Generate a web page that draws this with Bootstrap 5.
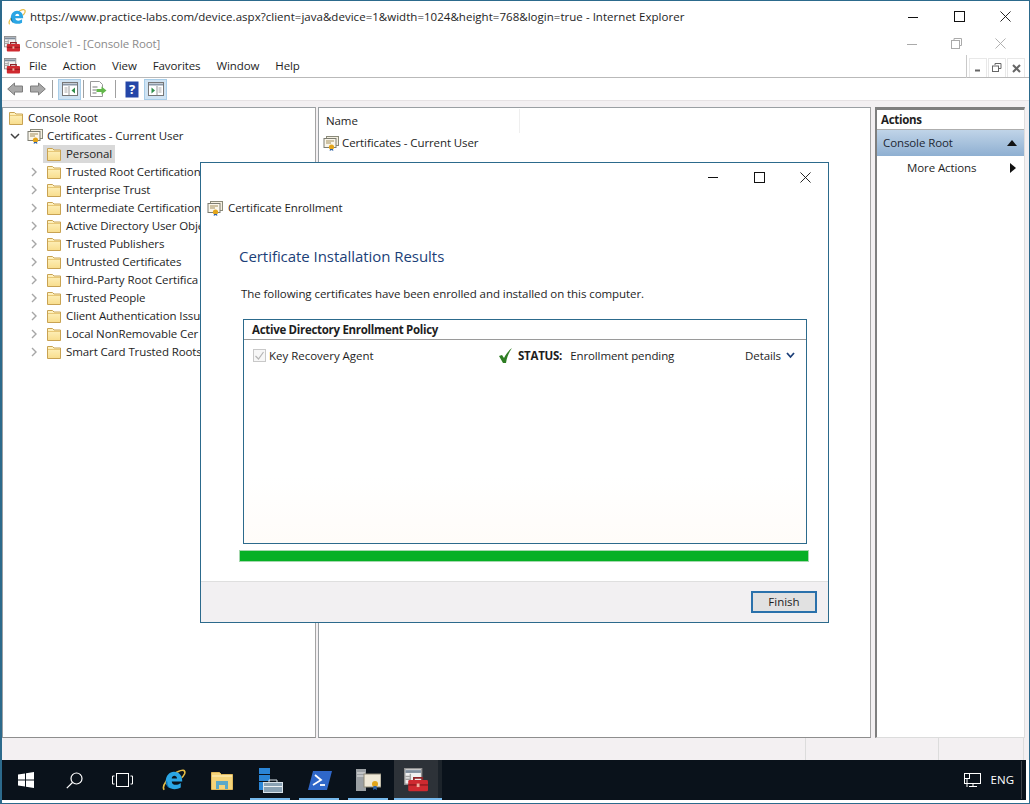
<!doctype html>
<html lang="en"><head><meta charset="utf-8"><title>Certificate Enrollment</title>
<link href="https://cdn.jsdelivr.net/npm/bootstrap@5.3.0/dist/css/bootstrap.min.css" rel="stylesheet">
<style>
html,body{height:100%;overflow:hidden;background:#fff}
body{font-family:"Open Sans","Noto Sans",sans-serif;font-size:11.5px;letter-spacing:-.1px;line-height:18px;color:#1e1e1e}
.shell{width:1030px;height:804px;border:solid #2c6a8c;border-width:1px 1px 1px 2px;display:flex;flex-direction:column;position:relative;background:#fff;overflow:hidden}
.ietitle{height:31px;padding-left:6px;gap:4px;flex:none}
.ietitle span{letter-spacing:.03px}
.winbtns{margin-left:auto;display:flex}
.ietitle .winbtns{margin-right:1px}
.winbtn{width:46px;height:30px;display:flex;align-items:center;justify-content:center}
.mmctitle{height:23px;flex:none;padding-left:2px;color:#8b8b8b;gap:5px}
.mmctitle .winbtns{margin-right:6px}
.mmctitle .winbtn{height:22px;width:44.5px}
.menubar{height:23px;flex:none;padding-left:2px;border-bottom:1px solid #b9b9b9;position:relative}
.menuitems{gap:16px;margin-left:9px}
.mdibtns{margin-left:auto;margin-right:4px;display:flex;gap:1px;align-self:flex-end;background:#fff}
.mdibtn{width:18px;height:19px;border:1px solid #e8e8e8;border-bottom:0;display:flex;align-items:center;justify-content:center}
.mdisep{position:absolute;right:62px;top:0;height:23px;width:1px;background:#c9c9c9}
.toolbar{height:23px;flex:none;border-bottom:1px solid #e6e2e4;padding-left:5px}
.tsep{width:1px;height:18px;background:#a0a0a0}
.tbtn{width:23px;height:21px;display:flex;align-items:center;justify-content:center}
.tbtn-on{background:#cfe3f3;border:1px solid #a8cde8}
.tg2{margin-left:2px}.tg5{margin-left:5px}.tg6{margin-left:6px}.tg7{margin-left:7px}.tg9{margin-left:9px}
.panes{flex:1;min-height:0;background:#f3f0f2;padding:6px 4px 0 0}
.pane{background:#fff;border:1px solid #9a9fa3;border-right-color:#a4a4a4;border-bottom-color:#8e8e8e;overflow:hidden}
.treepane{width:314px;flex:none;padding-top:1px}
.listpane{width:553px;flex:none;margin-left:2px}
.treerow{height:18px;display:flex;align-items:center;white-space:nowrap}
.tr0{padding-left:5px}.tr1{padding-left:5px}.tr2{padding-left:24px}
.ico{flex:none;display:block}
.chev{width:14px;flex:none;margin-right:5px;display:flex;justify-content:center}
.treelabel{margin-left:4px}
.sel{background:#d9d9d9;display:flex;align-items:center;height:18px;margin-left:-3px;padding:0 3px 0 3px}
.listhead{height:26px;padding-left:7px;display:flex;align-items:center}
.listhead span{width:194px;height:24px;display:flex;align-items:center;border-right:1px solid #efefef}
.listrow{padding-left:4px;height:18px;gap:3px}
.actpane{width:150px;flex:none;margin-left:4px;border:1px solid #dedede;border-top:3px solid #7f7f7f;border-left:2px solid #7f7f7f;border-bottom:1px solid #dcdcdc;background:#fff}
.acthead{height:20px;font-weight:700;padding-left:4px;border-bottom:1px solid #aeaeae;display:flex;align-items:center;letter-spacing:-.3px}
.actband{height:26px;background:linear-gradient(#c0d4e8,#8eafd1);padding:0 7px 0 6px;display:flex;align-items:center;justify-content:space-between;color:#1d2733}
.actrow{height:24px;padding:0 8px 0 30px;display:flex;align-items:center;justify-content:space-between}
.statusbar{height:22px;flex:none;background:#f3f0f2;display:flex;justify-content:flex-end;padding-right:5px}
.statusbar div{height:22px;border-left:1px solid #dcdcdc}
.sb1{width:133px}.sb2{width:85px}.sb3{width:1px}
.taskbar{height:40px;flex:none;background:#0a121b;display:flex;align-items:center;color:#fff;margin-right:3px;position:relative}
.tb-slot{width:48px;height:40px;display:flex;align-items:center;justify-content:center;position:relative;flex:none}
.tb-ie{margin-left:4px}
.tb-pin{width:49px}
.tb-pin::after{content:"";position:absolute;left:4px;right:5px;bottom:0;height:2px;background:#76b9ed}
.tb-cur{background:#2d3238;width:48px;border-right:4px solid #1c232a;margin-left:1px}
.tb-cur::after{left:0;right:-4px}
.tray{margin-left:auto;gap:10px;padding-right:7px;margin-right:4px;height:38px;border-right:1px solid #3c4248;letter-spacing:0}
.trayedge{height:3px;flex:none}
.dialog{position:absolute;left:198px;top:161px;width:629px;height:461px;background:#fff;border:1px solid #2c6a8c;display:flex;flex-direction:column}
.dlgtop{height:28px;flex:none;justify-content:flex-end}
.dlgtop .winbtn{width:46px;height:28px}
.dlgtitle{height:30px;padding-left:6px;gap:5px;flex:none;margin-top:2px}
.dlgbody{flex:1;min-height:0;padding:0 20px 0 38px}
.dlghead{font-size:15px;line-height:22px;color:#1c3f78;margin-top:22px;letter-spacing:-.05px}
.dlgintro{margin:18px 0 0 2px;height:18px;letter-spacing:-.07px}
.resultbox{margin:16px 0 0 4px;width:564px;height:225px;border:1px solid #2c6a8c;background:linear-gradient(#fff 70%,#fffcf9)}
.boxhead{height:20px;font-weight:700;padding-left:8px;border-bottom:1px solid #9a9a9a;display:flex;align-items:center;letter-spacing:-.3px}
.boxrow{height:31px;padding:0 11px 0 9px}
.chk{width:13px;height:13px;border:1px solid #c8c8c8;display:flex;align-items:center;justify-content:center;background:#f7f7f7;margin-right:3px}
.rowname{width:230px;letter-spacing:-.02px}
.statusword{font-weight:700;margin:0 8px 0 6px;letter-spacing:-.25px}
.details{margin-left:auto;gap:5px}
.prog{height:12px;width:570px;margin-top:6px;background:#06b025;border:1px solid #a5d8ae}
.dlgfoot{height:41px;flex:none;background:#f2f0f2;border-top:1px solid #dfdfdf;display:flex;align-items:center;justify-content:flex-end;padding-right:11px}
.finish{width:66px;height:22px;padding:0;font-size:11.5px;line-height:16px;color:#1e1e1e;background:#e1e1e1;border:2px solid #2a71ab;border-radius:0}
</style></head><body>
<svg width="0" height="0" class="position-absolute">
<defs>
<linearGradient id="fg" x1="0" y1="0" x2="0" y2="1"><stop offset="0" stop-color="#fff3c2"/><stop offset="1" stop-color="#f8dd8c"/></linearGradient>
<symbol id="folder" viewBox="0 0 16 16"><path d="M1.500 2.500h5l1.500 1.500h6.500v10.500h-13z" fill="url(#fg)" stroke="#c8a252"/><path d="M2 5.500h12" stroke="#e8c877"/></symbol>
<symbol id="cert" viewBox="0 0 16 16"><rect x="3.500" y="1.500" width="12" height="9" fill="#f4efe0" stroke="#8a8a7a"/><rect x="1" y="3.500" width="12" height="9" fill="#faf6ea" stroke="#7d7d72"/><path d="M3 6h8M3 8h5" stroke="#a38f5c"/><circle cx="8.500" cy="12" r="2.600" fill="#e3a51a"/><path d="M7 14l-.3 2 1.800-1 1.800 1-.3-2" fill="#2f62a8"/></symbol>
<symbol id="chevr" viewBox="0 0 10 10"><path d="M3 1l4 4-4 4" fill="none" stroke="#a6a6a6" stroke-width="1.400"/></symbol>
<symbol id="chevd" viewBox="0 0 10 10"><path d="M1 3l4 4 4-4" fill="none" stroke="#404040" stroke-width="1.500"/></symbol>
<symbol id="ie" viewBox="0 0 32 32"><path d="M3 29C-1 25 8 11 21 5c6-3 11-3 9 3-1 2-2 4-4 5" fill="none" stroke="#e6bd45" stroke-width="2.200"/><path d="M5 18C5 10 10 5 16 5c7 0 11 5 11 13H13c0 5 7 6 12 2v6c-9 5-20 1-20-8zm8-4h7c0-5-7-5-7 0z" fill="#2ba6e4"/><path d="M5 18c0 4 2 7 5 9-2-3-3-6-3-9z" fill="#0d6fb0"/></symbol>
<symbol id="mmc" viewBox="0 0 17 17"><rect x=".5" y=".5" width="12" height="11" fill="#f0f0f0" stroke="#8f8f8f"/><path d="M1 2.500h11" stroke="#7f8d9c" stroke-width="2"/><path d="M4.500 4v7M1 6h3.500M1 8h3.500" stroke="#a2a2a2"/><path d="M7 8.500V7h6v1.500" fill="none" stroke="#8f2226" stroke-width="1.200"/><rect x="3" y="8.500" width="14" height="8" rx="1" fill="#cf2a30"/><path d="M3 12h14" stroke="#8f1a1f"/><rect x="9" y="11" width="2" height="2.500" fill="#f0b0a0"/></symbol>
<symbol id="x" viewBox="0 0 12 12"><path d="M.5.5l11 11M11.500.5l-11 11" fill="none" stroke="currentColor"/></symbol>
</defs></svg>
<div class="shell">
  <div class="ietitle d-flex align-items-center">
    <svg class="ico" width="18" height="18"><use href="#ie"/></svg>
    <span>https://www.practice-labs.com/device.aspx?client=java&amp;device=1&amp;width=1024&amp;height=768&amp;login=true - Internet Explorer</span>
    <div class="winbtns">
      <div class="winbtn"><svg width="10" height="10"><path d="M0 5.500h10" stroke="#111"/></svg></div>
      <div class="winbtn"><svg width="11" height="11"><rect x=".5" y=".5" width="10" height="10" fill="none" stroke="#111"/></svg></div>
      <div class="winbtn"><svg width="11" height="11" color="#111"><use href="#x"/></svg></div>
    </div>
  </div>
  <div class="mmctitle d-flex align-items-center">
    <svg class="ico" width="16" height="16"><use href="#mmc"/></svg>
    <span>Console1 - [Console Root]</span>
    <div class="winbtns">
      <div class="winbtn"><svg width="10" height="10"><path d="M0 5.500h10" stroke="#aaa"/></svg></div>
      <div class="winbtn"><svg width="11" height="11"><path d="M3 2.500V.5h7.500v7H8.500" fill="none" stroke="#aaa"/><rect x=".5" y="2.500" width="8" height="8" fill="none" stroke="#aaa"/></svg></div>
      <div class="winbtn"><svg width="11" height="11" color="#aaa"><use href="#x"/></svg></div>
    </div>
  </div>
  <div class="menubar d-flex align-items-center">
    <svg class="ico" width="16" height="16"><use href="#mmc"/></svg>
    <div class="menuitems d-flex"><span>File</span><span>Action</span><span>View</span><span>Favorites</span><span>Window</span><span>Help</span></div>
    <div class="mdisep"></div>
    <div class="mdibtns">
      <div class="mdibtn"><svg width="8" height="8"><path d="M1 6.500h5" stroke="#666" stroke-width="2"/></svg></div>
      <div class="mdibtn"><svg width="10" height="10"><path d="M3 2V.5h6v5H7" fill="none" stroke="#666"/><rect x=".5" y="3" width="6" height="5.500" fill="none" stroke="#666"/></svg></div>
      <div class="mdibtn"><svg width="9" height="9"><path d="M1 1l7 7M8 1l-7 7" stroke="#666" stroke-width="2"/></svg></div>
    </div>
  </div>
  <div class="toolbar d-flex align-items-center">
    <svg width="16" height="14"><path d="M.7 7L7.500 1v3H15.500v6H7.500v3z" fill="#a9a9a9" stroke="#7e7e7e"/></svg>
    <svg width="16" height="14" class="tg7"><path d="M15.300 7L8.500 1v3H.5v6h8v3z" fill="#a9a9a9" stroke="#7e7e7e"/></svg>
    <div class="tsep tg6"></div>
    <div class="tbtn tbtn-on tg5"><svg width="16" height="14"><rect x=".5" y=".5" width="15" height="13" fill="#fff" stroke="#777"/><path d="M1 2.500h14" stroke="#8a98a8" stroke-width="2"/><path d="M7 4v9" stroke="#999"/><path d="M2.500 6h3M2.500 8h3M2.500 10h3" stroke="#aaa"/><path d="M13 5.500v6l-3.500-3z" fill="#2f8f4a"/></svg></div>
    <div class="tsep tg2"></div>
    <div class="tbtn tg2"><svg width="18" height="16"><path d="M1.500.5h9l3 3v12h-12z" fill="#fff" stroke="#999"/><path d="M3.500 6h5M3.500 9h4M3.500 12h4" stroke="#777"/><path d="M7.500 8h5V5.500l5 4-5 4V11h-5z" fill="#62b84a"/></svg></div>
    <div class="tsep tg6"></div>
    <svg width="14" height="17" class="tg9"><rect width="13" height="16" x=".5" y=".5" fill="#2446a8"/><text x="7" y="13" fill="#fff" font-size="13" font-weight="700" text-anchor="middle">?</text></svg>
    <div class="tbtn tbtn-on tg5"><svg width="16" height="14"><rect x=".5" y=".5" width="15" height="13" fill="#fff" stroke="#777"/><path d="M1 2.500h14" stroke="#8a98a8" stroke-width="2"/><path d="M9 4v9" stroke="#999"/><path d="M10.500 6h3M10.500 8h3M10.500 10h3" stroke="#aaa"/><path d="M3.500 5.500v6l3.500-3z" fill="#2f8f4a"/></svg></div>
  </div>
  <div class="panes d-flex">
    <div class="pane treepane">
      <div class="treerow tr0"><svg class="ico" width="16" height="16"><use href="#folder"/></svg><span class="treelabel ms-1">Console Root</span></div>
      <div class="treerow tr1"><div class="chev"><svg width="10" height="10"><use href="#chevd"/></svg></div><svg class="ico" width="16" height="16"><use href="#cert"/></svg><span class="treelabel">Certificates - Current User</span></div>
      <div class="treerow tr2"><div class="chev"></div><div class="sel"><svg class="ico" width="16" height="16"><use href="#folder"/></svg><span class="treelabel">Personal</span></div></div>
      <div class="treerow tr2"><div class="chev"><svg width="10" height="10"><use href="#chevr"/></svg></div><svg class="ico" width="16" height="16"><use href="#folder"/></svg><span class="treelabel">Trusted Root Certification</span></div>
      <div class="treerow tr2"><div class="chev"><svg width="10" height="10"><use href="#chevr"/></svg></div><svg class="ico" width="16" height="16"><use href="#folder"/></svg><span class="treelabel">Enterprise Trust</span></div>
      <div class="treerow tr2"><div class="chev"><svg width="10" height="10"><use href="#chevr"/></svg></div><svg class="ico" width="16" height="16"><use href="#folder"/></svg><span class="treelabel">Intermediate Certification</span></div>
      <div class="treerow tr2"><div class="chev"><svg width="10" height="10"><use href="#chevr"/></svg></div><svg class="ico" width="16" height="16"><use href="#folder"/></svg><span class="treelabel">Active Directory User Obje</span></div>
      <div class="treerow tr2"><div class="chev"><svg width="10" height="10"><use href="#chevr"/></svg></div><svg class="ico" width="16" height="16"><use href="#folder"/></svg><span class="treelabel">Trusted Publishers</span></div>
      <div class="treerow tr2"><div class="chev"><svg width="10" height="10"><use href="#chevr"/></svg></div><svg class="ico" width="16" height="16"><use href="#folder"/></svg><span class="treelabel">Untrusted Certificates</span></div>
      <div class="treerow tr2"><div class="chev"><svg width="10" height="10"><use href="#chevr"/></svg></div><svg class="ico" width="16" height="16"><use href="#folder"/></svg><span class="treelabel">Third-Party Root Certifica</span></div>
      <div class="treerow tr2"><div class="chev"><svg width="10" height="10"><use href="#chevr"/></svg></div><svg class="ico" width="16" height="16"><use href="#folder"/></svg><span class="treelabel">Trusted People</span></div>
      <div class="treerow tr2"><div class="chev"><svg width="10" height="10"><use href="#chevr"/></svg></div><svg class="ico" width="16" height="16"><use href="#folder"/></svg><span class="treelabel">Client Authentication Issu</span></div>
      <div class="treerow tr2"><div class="chev"><svg width="10" height="10"><use href="#chevr"/></svg></div><svg class="ico" width="16" height="16"><use href="#folder"/></svg><span class="treelabel">Local NonRemovable Cer</span></div>
      <div class="treerow tr2"><div class="chev"><svg width="10" height="10"><use href="#chevr"/></svg></div><svg class="ico" width="16" height="16"><use href="#folder"/></svg><span class="treelabel">Smart Card Trusted Roots</span></div>
    </div>
    <div class="pane listpane">
      <div class="listhead"><span>Name</span></div>
      <div class="listrow d-flex align-items-center"><svg class="ico" width="16" height="16"><use href="#cert"/></svg><span>Certificates - Current User</span></div>
    </div>
    <div class="actpane">
      <div class="acthead">Actions</div>
      <div class="actband"><span>Console Root</span><svg width="10" height="6"><path d="M0 6l5-6 5 6z" fill="#111"/></svg></div>
      <div class="actrow"><span>More Actions</span><svg width="6" height="10"><path d="M0 0l6 5-6 5z" fill="#111"/></svg></div>
    </div>
  </div>
  <div class="statusbar"><div class="sb1"></div><div class="sb2"></div><div class="sb3"></div></div>
  <div class="taskbar">
    <div class="tb-slot"><svg width="16" height="16"><path d="M0 2.500l7-1V7.500H0zM8 1.300l8-1.300V7.500H8zM0 8.500h7v6l-7-1zM8 8.500h8V16l-8-1.200z" fill="#fff"/></svg></div>
    <div class="tb-slot"><svg width="17" height="17"><circle cx="10.500" cy="6.500" r="5.500" fill="none" stroke="#fff" stroke-width="1.200"/><path d="M6.500 10.500L.8 16.200" stroke="#fff" stroke-width="1.200"/></svg></div>
    <div class="tb-slot"><svg width="21" height="14"><rect x="4.500" y=".5" width="12" height="13" fill="none" stroke="#fff"/><path d="M2.500 3H.5v8h2M18.500 3h2v8h-2" fill="none" stroke="#fff"/></svg></div>
    <div class="tb-slot tb-ie"><svg width="24" height="24"><use href="#ie"/></svg></div>
    <div class="tb-slot"><svg width="22" height="19"><path d="M.5 1.500h8l2 2h11v15H.5z" fill="#f5d47a" stroke="#e0b85a"/><path d="M1 5h20" stroke="#fff3c4"/><path d="M5 10h12v8h-3v-4H8v4H5z" fill="#5ba9c8"/></svg></div>
    <div class="tb-pin tb-slot"><svg width="25" height="25"><rect x="1" y="0" width="11" height="6" fill="#2a85d6"/><rect x="1" y="7" width="11" height="6" fill="#2a85d6"/><rect x="1" y="14" width="5" height="8" fill="#2a85d6"/><rect x="5.500" y="14.500" width="19" height="10" fill="#8aa2b4" stroke="#d8e2ea"/><path d="M6 18.500h18" stroke="#eef3f6"/><path d="M11 14v-2h8v2" fill="none" stroke="#d8e2ea"/></svg></div>
    <div class="tb-pin tb-slot"><svg width="24" height="19"><path d="M5 0h19l-5 19H0z" fill="#2f67c9"/><path d="M7 4l6 5-8 5" fill="none" stroke="#fff" stroke-width="1.800"/><path d="M12 14h5" stroke="#fff" stroke-width="1.800"/></svg></div>
    <div class="tb-pin tb-slot"><svg width="25" height="23"><rect x="0" y="0" width="10" height="22" fill="#9ba0a4"/><path d="M1 4h8M1 7h8" stroke="#e8e8e8"/><rect x="8" y="5" width="17" height="13" fill="#efe9d8" stroke="#8f8a78"/><circle cx="19" cy="15" r="3" fill="#e3a51a"/><path d="M17.500 17l-.5 4 2-1 2 1-.5-4" fill="#2f62a8"/></svg></div>
    <div class="tb-pin tb-slot tb-cur"><svg width="24" height="24"><use href="#mmc"/></svg></div>
    <div class="tray d-flex align-items-center">
      <svg width="17" height="15"><rect x=".5" y=".5" width="16" height="10" fill="none" stroke="#fff"/><rect x=".5" y=".5" width="5" height="5" fill="#0a121b" stroke="#fff"/><path d="M3 6v8M5 13.500h8M9 11v3" stroke="#fff"/></svg>
      <span>ENG</span>
    </div>
  </div>
  <div class="trayedge"></div>
  <div class="dialog">
    <div class="dlgtop d-flex align-items-center">
      <div class="winbtn"><svg width="10" height="10"><path d="M0 5.500h10" stroke="#111"/></svg></div>
      <div class="winbtn"><svg width="11" height="11"><rect x=".5" y=".5" width="10" height="10" fill="none" stroke="#111"/></svg></div>
      <div class="winbtn"><svg width="11" height="11" color="#111"><use href="#x"/></svg></div>
    </div>
    <div class="dlgtitle d-flex align-items-center"><svg class="ico" width="16" height="16"><use href="#cert"/></svg><span>Certificate Enrollment</span></div>
    <div class="dlgbody">
      <div class="dlghead">Certificate Installation Results</div>
      <p class="dlgintro">The following certificates have been enrolled and installed on this computer.</p>
      <div class="resultbox">
        <div class="boxhead">Active Directory Enrollment Policy</div>
        <div class="boxrow d-flex align-items-center">
          <div class="chk"><svg width="11" height="11"><path d="M1.500 6l3 3 5-7" fill="none" stroke="#b5b5b5" stroke-width="1.200"/></svg></div>
          <span class="rowname">Key Recovery Agent</span>
          <svg width="13" height="15"><path d="M0 8l3-1 2 3c2-4 4-7 8-10-3 4-5 9-6 15H4z" fill="#2e7d23"/></svg>
          <span class="statusword">STATUS:</span><span>Enrollment pending</span>
          <div class="details d-flex align-items-center"><span>Details</span><svg width="9" height="7"><path d="M1 1l3.500 4L8 1" fill="none" stroke="#1c3f78" stroke-width="1.800"/></svg></div>
        </div>
      </div>
      <div class="prog"></div>
    </div>
    <div class="dlgfoot"><button type="button" class="btn finish">Finish</button></div>
  </div>
</div>
<script src="https://cdn.jsdelivr.net/npm/bootstrap@5.3.0/dist/js/bootstrap.bundle.min.js"></script>
</body></html>
